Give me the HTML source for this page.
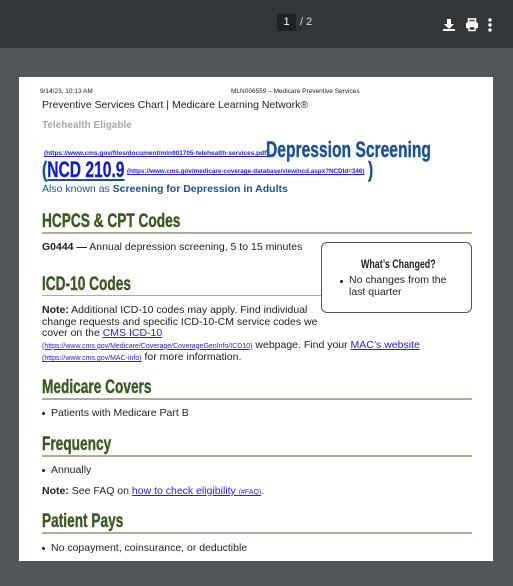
<!DOCTYPE html>
<html><head><style>
*{margin:0;padding:0;box-sizing:border-box}
body{width:513px;height:586px;background:#525659;position:relative;overflow:hidden;font-family:"Liberation Sans",Arial,sans-serif;color:#222}
.tb{position:absolute;left:0;top:0;width:513px;height:48px;background:#323639}
.pg{position:absolute;left:19px;top:77px;width:474px;height:484px;background:#fff}
.a{position:absolute;white-space:nowrap}
.h{font-weight:bold;color:#3a5a22;font-size:19px;transform:scaleX(0.72);transform-origin:0 0;-webkit-text-stroke:0.4px #3a5a22}
.ln{position:absolute;left:42px;width:430px;height:2px;background:#a9b096}
.t{font-size:10.5px}
a{color:#2323d8;text-decoration:underline}
.s{font-size:7px}
.b{position:absolute;font-size:10.5px}
.b:before{content:"";position:absolute;left:-9px;top:5px;width:3px;height:3px;background:#222;border-radius:50%}
.dep{color:#1a5296;font-weight:bold;font-size:22px;transform:scaleX(0.71);transform-origin:0 0;-webkit-text-stroke:0.4px #1a5296}
</style></head><body>
<div class="tb">
<div class="a" style="left:277px;top:14px;width:19px;height:17px;background:#1f2224;color:#fff;font-size:11px;text-align:center;line-height:17px">1</div>
<div class="a" style="left:300px;top:16px;color:#ddd;font-size:11px">/ 2</div>
<svg class="a" style="left:442px;top:18px" width="14" height="14" viewBox="0 0 14 14"><path d="M5 1h4v5h3l-5 5-5-5h3z" fill="#fff"/><rect x="1" y="11" width="12" height="2" fill="#fff"/></svg>
<svg class="a" style="left:465px;top:18px" width="14" height="14" viewBox="0 0 14 14"><rect x="3.5" y="1" width="7" height="3" fill="none" stroke="#fff" stroke-width="1.6"/><rect x="1" y="4.5" width="12" height="6" rx="1.5" fill="#fff"/><rect x="4" y="8.5" width="6" height="4" fill="#323639" stroke="#fff" stroke-width="1.4"/></svg>
<svg class="a" style="left:487px;top:18px" width="6" height="14" viewBox="0 0 6 14"><circle cx="3" cy="2" r="1.7" fill="#fff"/><circle cx="3" cy="7" r="1.7" fill="#fff"/><circle cx="3" cy="12" r="1.7" fill="#fff"/></svg>
</div>
<div class="pg"></div>
<div class="a" style="left:40px;top:88px;font-size:6.5px">9/14/23, 10:13 AM</div>
<div class="a" style="left:231px;top:88px;font-size:6.5px">MLN006559 – Medicare Preventive Services</div>
<div class="a" style="left:42px;top:99px;font-size:10.5px">Preventive Services Chart | Medicare Learning Network®</div>
<div class="a" style="left:42px;top:120px;font-size:10px;font-weight:bold;color:#a8a8a8">Telehealth Eligable</div>
<div class="a" style="left:44px;top:150px;font-size:6.5px;font-weight:bold"><a>(https://www.cms.gov/files/document/mln901705-telehealth-services.pdf)</a></div>
<div class="a dep" style="left:266px;top:137px">Depression Screening</div>
<div class="a dep" style="left:42px;top:157px">(<a style="color:#1818d0">NCD 210.9</a></div>
<div class="a" style="left:127px;top:168px;font-size:6.5px;font-weight:bold;transform:scaleX(0.97);transform-origin:0 0"><a>(https://www.cms.gov/medicare-coverage-database/view/ncd.aspx?NCDId=346)</a></div>
<div class="a dep" style="left:368px;top:157px">)</div>
<div class="a" style="left:42px;top:183px;font-size:10.5px;color:#1a5296">Also known as <b>Screening for Depression in Adults</b></div>

<div class="a h" style="left:42px;top:211px">HCPCS &amp; CPT Codes</div>
<div class="ln" style="top:232px"></div>
<div class="a t" style="left:42px;top:241px"><b>G0444 —</b> Annual depression screening, 5 to 15 minutes</div>
<div class="a" style="left:321px;top:242px;width:151px;height:71px;border:1px solid #555;border-radius:6px;background:#fff"></div>
<div class="a" style="left:361px;top:257px;font-weight:bold;font-size:12px;transform:scaleX(0.74);transform-origin:0 0">What’s Changed?</div>
<div class="b" style="left:349px;top:275px;line-height:11.5px">No changes from the<br>last quarter</div>

<div class="a h" style="left:42px;top:274px">ICD-10 Codes</div>
<div class="a" style="left:42px;top:295px;width:279px;height:1px;background:#a9b096"></div>
<div class="a t" style="left:42px;top:305px;line-height:11.6px"><b>Note:</b> Additional ICD-10 codes may apply. Find individual<br>change requests and specific ICD-10-CM service codes we<br>cover on the <a>CMS ICD-10</a><br><a class="s">(https://www.cms.gov/Medicare/Coverage/CoverageGenInfo/ICD10)</a> webpage. Find your <a>MAC’s website</a><br><a class="s">(https://www.cms.gov/MAC-info)</a> for more information.</div>

<div class="a h" style="left:42px;top:377px">Medicare Covers</div>
<div class="ln" style="top:398px"></div>
<div class="b" style="left:51px;top:407px">Patients with Medicare Part B</div>

<div class="a h" style="left:42px;top:434px">Frequency</div>
<div class="ln" style="top:455px"></div>
<div class="b" style="left:51px;top:464px">Annually</div>
<div class="a t" style="left:42px;top:485px"><b>Note:</b> See FAQ on <a>how to check eligibility <span class="s">(#FAQ)</span></a>.</div>

<div class="a h" style="left:42px;top:511px">Patient Pays</div>
<div class="ln" style="top:532px"></div>
<div class="b" style="left:51px;top:542px">No copayment, coinsurance, or deductible</div>
</body></html>
